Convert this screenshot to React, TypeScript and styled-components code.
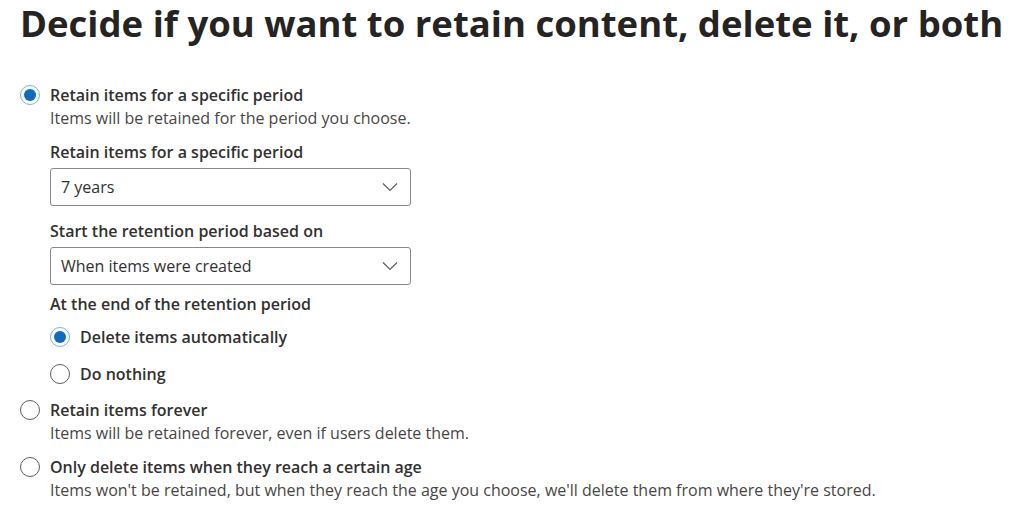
import styled, { createGlobalStyle } from 'styled-components';

const GlobalStyle = createGlobalStyle`
  html, body {
    margin: 0;
    padding: 0;
    background: #ffffff;
  }
  body {
    font-family: "Open Sans", "Noto Sans", "Liberation Sans", sans-serif;
    color: #323130;
  }
`;

const Page = styled.div`
  padding: 0 0 0 20px;
`;

const Heading = styled.h1`
  margin: 0;
  padding-top: 1px;
  font-size: 36.5px;
  line-height: 44px;
  font-weight: 700;
  color: #252423;
  white-space: nowrap;
`;

const Options = styled.div`
  display: flex;
  flex-direction: column;
  margin-top: 39px;
`;

const Option = styled.div<{ $gap?: number }>`
  display: flex;
  flex-direction: column;
  margin-top: ${(p) => p.$gap ?? 0}px;
`;

const OptionRow = styled.label`
  display: flex;
  align-items: center;
  gap: 10px;
  cursor: pointer;
`;

const Radio = styled.span<{ $checked?: boolean }>`
  position: relative;
  flex: none;
  width: 20px;
  height: 20px;
  box-sizing: border-box;
  border-radius: 50%;
  border: ${(p) => (p.$checked ? '1.5px solid #74b4e8' : '1.5px solid #605e5c')};
  background: #fff;

  &::after {
    content: '';
    display: ${(p) => (p.$checked ? 'block' : 'none')};
    position: absolute;
    inset: 3px;
    border-radius: 50%;
    background: #0f6cbd;
  }
`;

const OptionLabel = styled.span`
  font-size: 16px;
  line-height: 22px;
  font-weight: 600;
  color: #323130;
`;

const Description = styled.div`
  margin-left: 30px;
  margin-top: 1px;
  font-size: 16px;
  line-height: 22px;
  color: #484644;
`;

const Nested = styled.div`
  display: flex;
  flex-direction: column;
  margin-left: 30px;
  width: 361px;
`;

const FieldLabel = styled.div<{ $top: number }>`
  margin-top: ${(p) => p.$top}px;
  font-size: 16px;
  line-height: 22px;
  font-weight: 600;
  color: #323130;
`;

const Select = styled.div`
  margin-top: 5px;
  height: 38px;
  box-sizing: border-box;
  border: 1px solid #8a8886;
  border-radius: 3px;
  display: flex;
  align-items: center;
  justify-content: space-between;
  padding: 0 12px 0 10px;
  font-size: 16px;
  color: #323130;
`;

const Chevron = () => (
  <svg width="16" height="10" viewBox="0 0 16 10" fill="none">
    <path d="M1 1.5 L8 8.5 L15 1.5" stroke="#605e5c" strokeWidth="1.2" />
  </svg>
);

const SubRadios = styled.div`
  display: flex;
  flex-direction: column;
  gap: 9px;
  margin-top: 8px;
`;

const SubRow = styled.label`
  display: flex;
  align-items: center;
  gap: 10px;
  height: 28px;
`;

export default function App() {
  return (
    <Page>
      <GlobalStyle />
      <Heading>Decide if you want to retain content, delete it, or both</Heading>
      <Options>
        <Option>
          <OptionRow>
            <Radio $checked />
            <OptionLabel>Retain items for a specific period</OptionLabel>
          </OptionRow>
          <Description>Items will be retained for the period you choose.</Description>
          <Nested>
            <FieldLabel $top={12}>Retain items for a specific period</FieldLabel>
            <Select>
              <span>7 years</span>
              <Chevron />
            </Select>
            <FieldLabel $top={14}>Start the retention period based on</FieldLabel>
            <Select>
              <span>When items were created</span>
              <Chevron />
            </Select>
            <FieldLabel $top={8}>At the end of the retention period</FieldLabel>
            <SubRadios>
              <SubRow>
                <Radio $checked />
                <OptionLabel>Delete items automatically</OptionLabel>
              </SubRow>
              <SubRow>
                <Radio />
                <OptionLabel>Do nothing</OptionLabel>
              </SubRow>
            </SubRadios>
          </Nested>
        </Option>
        <Option $gap={11}>
          <OptionRow>
            <Radio />
            <OptionLabel>Retain items forever</OptionLabel>
          </OptionRow>
          <Description>Items will be retained forever, even if users delete them.</Description>
        </Option>
        <Option $gap={12}>
          <OptionRow>
            <Radio />
            <OptionLabel>Only delete items when they reach a certain age</OptionLabel>
          </OptionRow>
          <Description>
            Items won't be retained, but when they reach the age you choose, we'll delete them from where they're stored.
          </Description>
        </Option>
      </Options>
    </Page>
  );
}
